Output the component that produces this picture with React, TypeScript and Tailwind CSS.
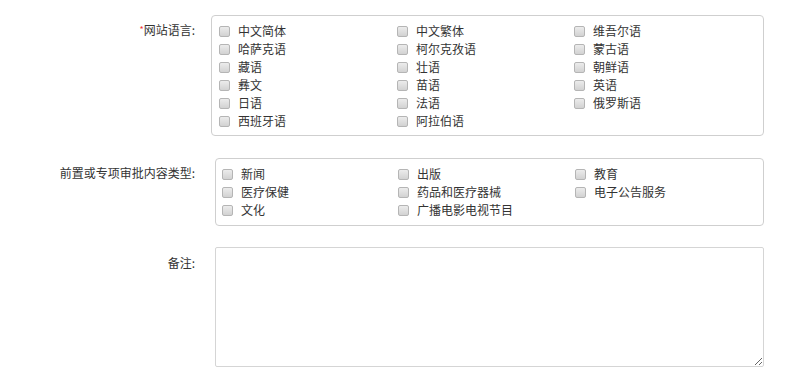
import React from "react";

const font = { fontFamily: '"Noto Sans CJK SC", "Liberation Sans", sans-serif' };

function Check({ label }: { label: string }) {
  return (
    <label className="flex items-center h-[18px] whitespace-nowrap">
      <span className="w-[11px] h-[11px] rounded-[2px] border border-[#b5b5b5] bg-gradient-to-b from-[#ececec] to-[#d2d2d2] shrink-0" />
      <span className="ml-[8px]">{label}</span>
    </label>
  );
}

const langs = [
  "中文简体", "中文繁体", "维吾尔语",
  "哈萨克语", "柯尔克孜语", "蒙古语",
  "藏语", "壮语", "朝鲜语",
  "彝文", "苗语", "英语",
  "日语", "法语", "俄罗斯语",
  "西班牙语", "阿拉伯语",
];

const types = [
  "新闻", "出版", "教育",
  "医疗保健", "药品和医疗器械", "电子公告服务",
  "文化", "广播电影电视节目",
];

export default function App() {
  return (
    <div className="w-[803px] h-[392px] bg-white text-[12px] text-[#333] leading-[18px]" style={font}>
      <div className="pt-[15px] flex flex-col">
        <div className="flex">
          <div className="w-[195px] shrink-0 text-right pt-[6px]">
            <span className="text-[#e33] text-[9px] align-top">*</span>网站语言:
          </div>
          <div className="ml-[16px] w-[553px] h-[121px] border border-[#cfcfcf] rounded-[4px] pl-[7px] pt-[6px]">
            <div className="grid grid-cols-[178px_177px_177px]">
              {langs.map((l) => (
                <Check key={l} label={l} />
              ))}
            </div>
          </div>
        </div>
        <div className="flex mt-[22px]">
          <div className="w-[195px] shrink-0 text-right pt-[6px]">前置或专项审批内容类型:</div>
          <div className="ml-[20px] w-[549px] h-[68px] border border-[#cfcfcf] rounded-[4px] pl-[6px] pt-[6px]">
            <div className="grid grid-cols-[176px_177px_177px]">
              {types.map((l) => (
                <Check key={l} label={l} />
              ))}
            </div>
          </div>
        </div>
        <div className="flex mt-[21px]">
          <div className="w-[195px] shrink-0 text-right pt-[7px]">备注:</div>
          <textarea className="ml-[20px] w-[549px] h-[120px] border border-[#d5d5d5] rounded-[2px] outline-none" />
        </div>
      </div>
    </div>
  );
}
